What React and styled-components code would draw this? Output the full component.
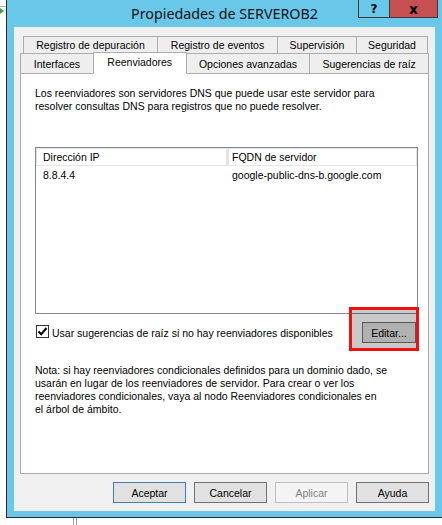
import React from 'react';
import styled, { createGlobalStyle } from 'styled-components';

const GlobalStyle = createGlobalStyle`
    html, body {
        margin: 0;
        padding: 0;
        background: #ffffff;
        overflow: hidden;
    }
    body {
        font-family: "Liberation Sans", Arial, sans-serif;
        font-size: 10.5px;
        color: #000;
    }
`;

const Page = styled.div`
    width: 442px;
    height: 525px;
    display: flex;
    flex-direction: column;
    background: #ffffff;
    overflow: hidden;
`;

const TopArea = styled.div`
    display: flex;
    height: 518px;
`;

const LeftStrip = styled.div`
    width: 6px;
    flex-shrink: 0;
    display: flex;
    flex-direction: column;
    padding-top: 6px;
    gap: 1px;
`;

const StripLine = styled.div`
    height: 1px;
    background: #b4b4b4;
`;

const Window = styled.div`
    width: 435px;
    flex-shrink: 0;
    border-left: 1px solid #2b2b2b;
    border-bottom: 1px solid #2b2b2b;
    background: #69c8ea;
    display: flex;
    flex-direction: column;
`;

const TitleBar = styled.div`
    height: 27px;
    display: grid;
    grid-template-columns: 1fr auto 1fr;
    align-items: start;
`;

const TitleText = styled.div`
    grid-column: 2;
    font-family: "Noto Sans", "Open Sans", sans-serif;
    font-size: 14.3px;
    line-height: 27px;
    color: #111;
    white-space: nowrap;
`;

const CaptionButtons = styled.div`
    grid-column: 3;
    justify-self: end;
    display: flex;
    margin-right: 4px;
`;

const CaptionButton = styled.div`
    width: ${p => p.$w}px;
    height: 17px;
    border: 1px solid #3a3a3a;
    border-top: none;
    margin-left: ${p => (p.$first ? 0 : -1)}px;
    background: ${p => (p.$close ? '#c75050' : 'transparent')};
    display: flex;
    align-items: center;
    justify-content: center;
    font-family: "DejaVu Sans", sans-serif;
    font-weight: bold;
    font-size: ${p => (p.$close ? 14 : 12)}px;
    line-height: 1;
    color: #000;
`;

const Client = styled.div`
    margin: 0 7px 6px 7px;
    height: 484px;
    background: #f0f0f0;
    display: flex;
    flex-direction: column;
    padding: 9px 6px 8px 6px;
    box-sizing: border-box;
`;

const TabRow = styled.div`
    display: flex;
    position: relative;
    z-index: 1;
    padding-left: ${p => p.$indent}px;
    margin-top: ${p => (p.$first ? 0 : -1)}px;
    align-items: flex-end;
`;

const Tab = styled.div`
    box-sizing: border-box;
    width: ${p => p.$w}px;
    height: ${p => (p.$selected ? p.$h + 1 : p.$h)}px;
    margin-top: ${p => (p.$selected ? -1 : 0)}px;
    margin-left: ${p => (p.$first ? 0 : -1)}px;
    border: 1px solid #acacac;
    border-bottom-color: ${p => (p.$selected ? '#ffffff' : '#acacac')};
    background: ${p => (p.$selected ? '#ffffff' : '#eeeeee')};
    position: relative;
    z-index: ${p => (p.$selected ? 2 : 1)};
    display: flex;
    align-items: center;
    justify-content: center;
    padding-bottom: ${p => (p.$selected ? 3 : 0)}px;
    white-space: nowrap;
`;

const Pane = styled.div`
    box-sizing: border-box;
    height: 401px;
    margin-top: -1px;
    border: 1px solid #acacac;
    background: #ffffff;
    padding: 12px 10px 0 14px;
    display: flex;
    flex-direction: column;
`;

const Paragraph = styled.p`
    margin: 0;
    line-height: 13px;
    margin-top: ${p => p.$top || 0}px;
`;

const ListView = styled.div`
    box-sizing: border-box;
    margin-top: 34px;
    height: 167px;
    border: 1px solid #828790;
    background: #ffffff;
    display: flex;
    flex-direction: column;
`;

const ListRow = styled.div`
    display: grid;
    grid-template-columns: 191px 1fr;
    height: ${p => (p.$header ? 18 : 17)}px;
`;

const HeaderCell = styled.div`
    border: 1px solid #e5e5e5;
    border-left-width: ${p => (p.$first ? 1 : 2)}px;
    background: #ffffff;
    padding-left: ${p => (p.$first ? 6 : 3)}px;
    display: flex;
    align-items: center;
    white-space: nowrap;
`;

const Cell = styled.div`
    padding-left: ${p => (p.$first ? 7 : 5)}px;
    display: flex;
    align-items: center;
    white-space: nowrap;
`;

const OptionRow = styled.div`
    display: flex;
    align-items: center;
    margin-top: 8px;
    height: 21px;
`;

const CheckLabel = styled.label`
    display: flex;
    align-items: center;
    gap: 3px;
    margin-left: 1px;
    flex: 1;
    white-space: nowrap;
`;

const CheckBox = styled.span`
    box-sizing: border-box;
    width: 13px;
    height: 13px;
    border: 1px solid #333333;
    background: #ffffff;
    display: flex;
    align-items: center;
    justify-content: center;
    margin-top: -2px;
`;

const Highlight = styled.div`
    position: relative;
    margin-right: 2px;
`;

const RedFrame = styled.div`
    position: absolute;
    left: -13px;
    right: -3px;
    top: -15px;
    bottom: -8px;
    border: 3px solid #ee1111;
    background: rgba(0, 0, 0, 0.21);
    pointer-events: none;
`;

const Button = styled.button`
    box-sizing: border-box;
    width: ${p => p.$w || 73}px;
    height: 21px;
    padding: 0;
    font-family: "Liberation Sans", Arial, sans-serif;
    font-size: 10.5px;
    color: ${p => (p.$disabled ? '#838383' : '#000000')};
    background: ${p => (p.$disabled ? '#f4f4f4' : '#e1e1e1')};
    border: 1px solid ${p => (p.$default ? '#3c7fb1' : p.$disabled ? '#bfbfbf' : '#707070')};
    border-radius: 0;
`;

const ButtonBar = styled.div`
    display: flex;
    justify-content: flex-end;
    gap: 8px;
    margin-top: 8px;
`;

const BottomStrip = styled.div`
    height: 7px;
    display: flex;
    padding-left: 73px;
`;

const Splitter = styled.div`
    width: 2px;
    border-left: 1px solid #a0a0a0;
    border-right: 1px solid #a0a0a0;
`;

const backTabs = [
    { label: 'Registro de depuración', w: 135 },
    { label: 'Registro de eventos', w: 121 },
    { label: 'Supervisión', w: 80 },
    { label: 'Seguridad', w: 72 },
];

const frontTabs = [
    { label: 'Interfaces', w: 74 },
    { label: 'Reenviadores', w: 94, selected: true },
    { label: 'Opciones avanzadas', w: 125 },
    { label: 'Sugerencias de raíz', w: 120 },
];

const forwarders = [
    { ip: '8.8.4.4', fqdn: 'google-public-dns-b.google.com' },
];

const App = () => {
    return (
        <Page>
            <GlobalStyle />
            <TopArea>
                <LeftStrip>
                    <StripLine />
                    <svg width="4" height="6" viewBox="0 0 4 6">
                        <polygon points="0,0 4,3 0,6" fill="#3aa63a" />
                    </svg>
                </LeftStrip>
                <Window>
                    <TitleBar>
                        <TitleText>Propiedades de SERVEROB2</TitleText>
                        <CaptionButtons>
                            <CaptionButton $w={30} $first>?</CaptionButton>
                            <CaptionButton $w={47} $close>x</CaptionButton>
                        </CaptionButtons>
                    </TitleBar>
                    <Client>
                        <TabRow $first $indent={3}>
                            {backTabs.map((t, i) => (
                                <Tab key={t.label} $w={t.w} $h={18} $first={i === 0}>
                                    {t.label}
                                </Tab>
                            ))}
                        </TabRow>
                        <TabRow $indent={0}>
                            {frontTabs.map((t, i) => (
                                <Tab
                                    key={t.label}
                                    $w={t.w}
                                    $h={21}
                                    $first={i === 0}
                                    $selected={t.selected}
                                >
                                    {t.label}
                                </Tab>
                            ))}
                        </TabRow>
                        <Pane>
                            <Paragraph $top={1}>
                                Los reenviadores son servidores DNS que puede usar este servidor para
                                <br />
                                resolver consultas DNS para registros que no puede resolver.
                            </Paragraph>

                            <ListView>
                                <ListRow $header>
                                    <HeaderCell $first>Dirección IP</HeaderCell>
                                    <HeaderCell>FQDN de servidor</HeaderCell>
                                </ListRow>
                                {forwarders.map(f => (
                                    <ListRow key={f.ip}>
                                        <Cell $first>{f.ip}</Cell>
                                        <Cell>{f.fqdn}</Cell>
                                    </ListRow>
                                ))}
                            </ListView>

                            <OptionRow>
                                <CheckLabel>
                                    <CheckBox>
                                        <svg width="11" height="11" viewBox="0 0 11 11">
                                            <polyline
                                                points="1.5,5.5 4.2,8.3 9.5,2"
                                                fill="none"
                                                stroke="#000"
                                                strokeWidth="2"
                                            />
                                        </svg>
                                    </CheckBox>
                                    Usar sugerencias de raíz si no hay reenviadores disponibles
                                </CheckLabel>
                                <Highlight>
                                    <Button $w={54}>Editar...</Button>
                                    <RedFrame />
                                </Highlight>
                            </OptionRow>

                            <Paragraph $top={21}>
                                Nota: si hay reenviadores condicionales definidos para un dominio dado, se
                                <br />
                                usarán en lugar de los reenviadores de servidor. Para crear o ver los
                                <br />
                                reenviadores condicionales, vaya al nodo Reenviadores condicionales en
                                <br />
                                el árbol de ámbito.
                            </Paragraph>
                        </Pane>
                        <ButtonBar>
                            <Button $default>Aceptar</Button>
                            <Button>Cancelar</Button>
                            <Button $disabled>Aplicar</Button>
                            <Button>Ayuda</Button>
                        </ButtonBar>
                    </Client>
                </Window>
            </TopArea>
            <BottomStrip>
                <Splitter />
            </BottomStrip>
        </Page>
    );
};

export default App;
